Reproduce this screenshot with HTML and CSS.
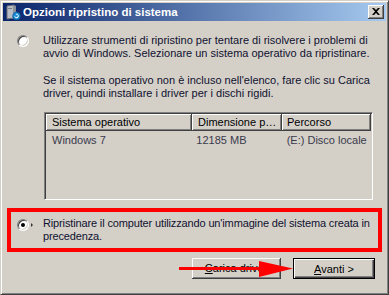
FILE: index.html
```html
<!DOCTYPE html>
<html lang="it">
<head>
  <meta charset="UTF-8" />
  <title>Opzioni ripristino di sistema</title>
  <link rel="stylesheet" href="styles.css">
</head>
<body>
  <div class="window">
    <div class="titlebar">
      <svg class="app-icon" width="16" height="16" viewBox="0 0 16 16">
        <path d="M2 2 L9 1 L9 14 L2 15 Z" fill="#b8bcc4" stroke="#6a6e78" stroke-width="1"/>
        <path d="M9 1 L11 2 L11 13 L9 14 Z" fill="#8a8e98"/>
        <rect x="3" y="4" width="4" height="1" fill="#7a7e88"/>
        <circle cx="11.5" cy="12" r="3.8" fill="#1b8fd8" stroke="#0d5aa0" stroke-width="0.8"/>
        <path d="M9.8 12.4 A1.8 1.8 0 1 0 11.2 10.2" fill="none" stroke="#fff" stroke-width="1"/>
      </svg>
      <span class="title">Opzioni ripristino di sistema</span>
      <div class="close-btn">
        <svg width="8" height="7" viewBox="0 0 8 7">
          <path d="M0 0 L2 0 L4 2 L6 0 L8 0 L5 3.5 L8 7 L6 7 L4 5 L2 7 L0 7 L3 3.5 Z" fill="#000"/>
        </svg>
      </div>
    </div>

    <div class="content">
      <div class="option">
        <span class="radio"></span>
        <div class="option-text">
          <p>Utilizzare strumenti di ripristino per tentare di risolvere i problemi di<br>avvio di Windows. Selezionare un sistema operativo da ripristinare.</p>
          <p>Se il sistema operativo non è incluso nell'elenco, fare clic su Carica<br>driver, quindi installare i driver per i dischi rigidi.</p>
          <div class="listbox">
            <div class="list-header">
              <span class="col col-os">Sistema operativo</span>
              <span class="col col-size">Dimensione p…</span>
              <span class="col col-path">Percorso</span>
            </div>
            <div class="list-row">
              <span class="col col-os">Windows 7</span>
              <span class="col col-size">12185 MB</span>
              <span class="col col-path">(E:) Disco locale</span>
            </div>
          </div>
        </div>
      </div>

      <div class="option highlight">
        <span class="radio checked"></span>
        <span class="focus-mark"></span>
        <div class="option-text tight">
          <p>Ripristinare il computer utilizzando un'immagine del sistema creata in<br>precedenza.</p>
        </div>
      </div>

      <div class="actions">
        <div class="btn btn-driver"><u>C</u>arica driver</div>
        <div class="btn btn-default"><u>A</u>vanti &gt;</div>
        <svg class="red-arrow" width="116" height="20" viewBox="0 0 116 20">
          <rect x="0" y="8" width="84" height="3" fill="#f00"/>
          <path d="M80 2 L114 9.5 L80 18 Z" fill="#f00"/>
        </svg>
      </div>
    </div>
  </div>
</body>
</html>
```

FILE: styles.css
```css
body {
  margin: 0;
  font-family: "Liberation Sans", Arial, sans-serif;
  font-size: 11px;
  color: #101030;
  background: #d4d0c8;
}
p {
  margin: 0;
}
.window {
  width: 389px;
  height: 295px;
  box-sizing: border-box;
  background: #d4d0c8;
  border: 1px solid;
  border-color: #d4d0c8 #404040 #404040 #d4d0c8;
  box-shadow: inset 1px 1px #fff, inset -1px -1px #808080;
  padding: 2px;
  display: flex;
  flex-direction: column;
}
.titlebar {
  height: 18px;
  display: flex;
  align-items: center;
  background: linear-gradient(to right, #0a246a, #a6caf0);
  color: #fff;
}
.app-icon {
  margin-left: 2px;
  flex: none;
}
.title {
  margin-left: 2px;
  font-weight: bold;
  font-size: 11.5px;
  white-space: nowrap;
}
.close-btn {
  margin-left: auto;
  margin-right: 2px;
  width: 16px;
  height: 14px;
  box-sizing: border-box;
  background: #d4d0c8;
  border-right: 1px solid #404040;
  border-bottom: 1px solid #404040;
  box-shadow: inset 1px 1px #fff, inset -1px -1px #808080;
  display: flex;
  align-items: center;
  justify-content: center;
}

.content {
  flex: 1;
  display: flex;
  flex-direction: column;
}
.option {
  display: flex;
  align-items: flex-start;
  padding: 13px 0 0 14px;
  line-height: 13px;
  white-space: nowrap;
}
.option-text p + p {
  margin-top: 14px;
}
.option-text.tight {
  letter-spacing: -0.14px;
}
.radio {
  flex: none;
  width: 12px;
  height: 12px;
  box-sizing: border-box;
  margin-top: 1px;
  margin-right: 14px;
  border-radius: 50%;
  background: #fff;
  border: 1px solid;
  border-color: #808080 #fff #fff #808080;
  box-shadow: inset 1px 1px #404040, inset -1px -1px #d4d0c8;
  position: relative;
}
.radio.checked::after {
  content: "";
  position: absolute;
  left: 3px;
  top: 3px;
  width: 4px;
  height: 4px;
  border-radius: 50%;
  background: #000;
}

.listbox {
  margin: 12px 0 0 1px;
  width: 329px;
  height: 88px;
  box-sizing: border-box;
  border: 1px solid;
  border-color: #808080 #fff #fff #808080;
  box-shadow: inset 1px 1px #404040, inset -1px -1px #d4d0c8;
  padding: 1px;
}
.list-header,
.list-row {
  display: flex;
}
.list-header .col {
  height: 17px;
  line-height: 16px;
  box-sizing: border-box;
  border-right: 1px solid #404040;
  border-bottom: 1px solid #404040;
  box-shadow: inset 1px 1px #fff, inset -1px -1px #808080;
  color: #000;
}
.col {
  padding-left: 6px;
  overflow: hidden;
}
.col-os { width: 146px; }
.col-size { width: 90px; }
.col-path { width: 89px; padding-left: 5px; }
.list-row {
  margin-top: 3px;
  line-height: 13px;
  color: #3a3a4c;
}

.highlight {
  margin: 8px 0 0 4px;
  width: 375px;
  height: 44px;
  box-sizing: border-box;
  border: 4px solid #f00;
  padding: 5px 0 0 6px;
}
.highlight .radio {
  margin-top: 2px;
  margin-right: 0;
}
.focus-mark {
  flex: none;
  width: 0;
  height: 0;
  margin: 6px 10px 0 2px;
  border-left: 2px solid #333;
  border-top: 2px solid transparent;
  border-bottom: 2px solid transparent;
}

.actions {
  position: relative;
  display: flex;
  justify-content: flex-end;
  gap: 12px;
  padding-right: 11px;
  margin-top: 6px;
}
.btn {
  height: 21px;
  line-height: 20px;
  box-sizing: border-box;
  text-align: center;
  color: #000;
  background: #d4d0c8;
  border-right: 1px solid #404040;
  border-bottom: 1px solid #404040;
  box-shadow: inset 1px 1px #fff, inset -1px -1px #808080;
}
.btn-driver {
  width: 89px;
}
.btn-default {
  width: 82px;
  border: 1px solid #000;
  box-shadow: inset 1px 1px #fff, inset -1px -1px #404040, inset -2px -2px #808080;
}
.red-arrow {
  position: absolute;
  left: 176px;
  top: 1px;
}
```
